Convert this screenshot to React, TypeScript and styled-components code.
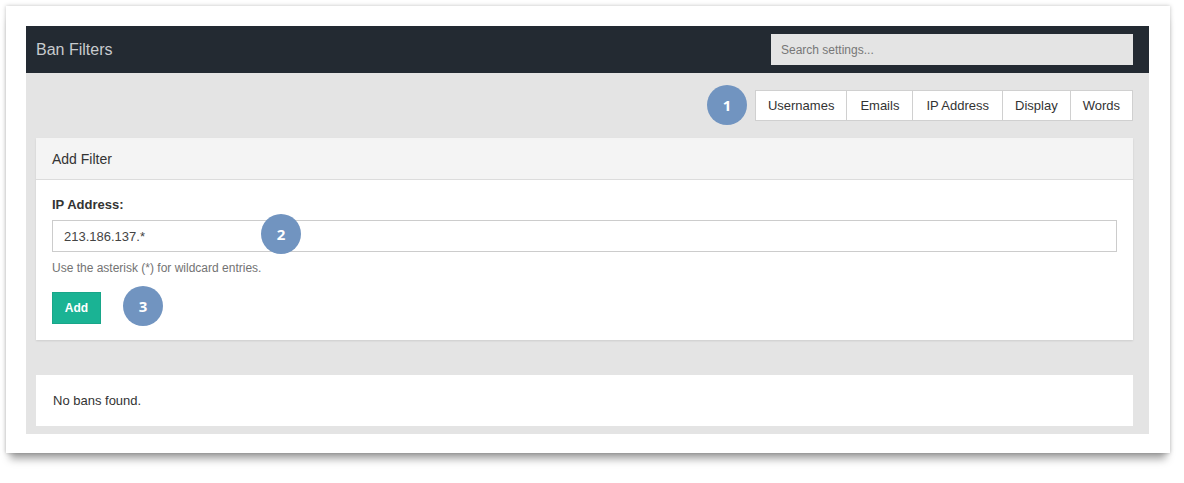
import React from "react";
import styled, { createGlobalStyle } from "styled-components";

const Global = createGlobalStyle`
  body { margin: 0; background: #fff; font-family: "Liberation Sans", Arial, sans-serif; }
`;
const Page = styled.div`
  position: relative; width: 1184px; height: 483px; background: #fff;
`;
const Sheet = styled.div`
  position: absolute; left: 6px; top: 6px; width: 1164px; height: 447px; background: #fff;
  box-shadow: 0 0 4px rgba(0,0,0,0.25), 0 10px 8px -4px rgba(0,0,0,0.35);
  padding: 20px 21px 0 20px; box-sizing: border-box;
`;
const AppBox = styled.div`
  width: 1123px; height: 408px; background: #e4e4e4; display: flex; flex-direction: column;
`;
const Header = styled.div`
  height: 47px; background: #232a32; display: flex; align-items: center; justify-content: space-between;
  padding: 0 16px 0 10px; flex-shrink: 0;
`;
const Title = styled.div` color: #c8cbce; font-size: 16px; `;
const Search = styled.div`
  width: 362px; height: 31px; background: #e4e4e4; color: #777; font-size: 12px;
  display: flex; align-items: center; padding-left: 10px; box-sizing: border-box;
`;
const Body = styled.div` padding: 17px 16px 0 10px; display: flex; flex-direction: column; `;
const TabRow = styled.div` display: flex; justify-content: flex-end; position: relative; `;
const Tab = styled.div`
  height: 31px; padding: 0 ${p => p.$pad}px; background: #fff; border: 1px solid #d0d0d0; margin-left: -1px;
  display: flex; align-items: center; font-size: 13px; color: #333; box-sizing: border-box;
`;
const Panel = styled.div`
  margin-top: 17px; background: #fff; box-shadow: 0 1px 2px rgba(0,0,0,0.1); position: relative;
`;
const PanelHead = styled.div`
  height: 42px; background: #f4f4f4; border-bottom: 1px solid #dcdcdc; display: flex; align-items: center;
  padding-left: 16px; font-size: 14px; color: #333; box-sizing: border-box;
`;
const PanelBody = styled.div` padding: 17px 16px 16px 16px; `;
const Label = styled.div` font-size: 13px; font-weight: bold; color: #333; `;
const Input = styled.div`
  margin-top: 8px; height: 32px; border: 1px solid #ccc; display: flex; align-items: center; padding-left: 11px;
  font-size: 13px; color: #444; box-sizing: border-box;
`;
const Help = styled.div` margin-top: 9px; font-size: 12px; color: #737373; `;
const Button = styled.div`
  margin-top: 17px; width: 49px; height: 32px; background: #1ab394; border: 1px solid #18a689; box-sizing: border-box;
  color: #fff; font-size: 12px; font-weight: bold; display: flex; align-items: center; justify-content: center;
`;
const Empty = styled.div`
  margin-top: 35px; height: 51px; background: #fff; display: flex; align-items: center; padding-left: 17px;
  font-size: 13px; color: #333;
`;
const Badge = styled.div`
  position: absolute; left: ${p => p.$x - 20}px; top: ${p => p.$y - 20}px; width: 40px; height: 40px; border-radius: 50%;
  background: #7194c0; color: #fff; font-family: "Open Sans", sans-serif; font-weight: bold; font-size: 15px;
  display: flex; align-items: center; justify-content: center;
`;

export default function App() {
  return (
    <Page>
      <Global />
      <Sheet>
        <AppBox>
          <Header>
            <Title>Ban Filters</Title>
            <Search>Search settings...</Search>
          </Header>
          <Body>
            <TabRow>
              <Tab $pad={12}>Usernames</Tab>
              <Tab $pad={13}>Emails</Tab>
              <Tab $pad={13}>IP Address</Tab>
              <Tab $pad={12}>Display</Tab>
              <Tab $pad={12}>Words</Tab>
            </TabRow>
            <Panel>
              <PanelHead>Add Filter</PanelHead>
              <PanelBody>
                <Label>IP Address:</Label>
                <Input>213.186.137.*</Input>
                <Help>Use the asterisk (*) for wildcard entries.</Help>
                <Button>Add</Button>
              </PanelBody>
            </Panel>
            <Empty>No bans found.</Empty>
          </Body>
        </AppBox>
      </Sheet>
      <Badge $x={727} $y={105}>1</Badge>
      <Badge $x={281} $y={234}>2</Badge>
      <Badge $x={143} $y={306}>3</Badge>
    </Page>
  );
}
